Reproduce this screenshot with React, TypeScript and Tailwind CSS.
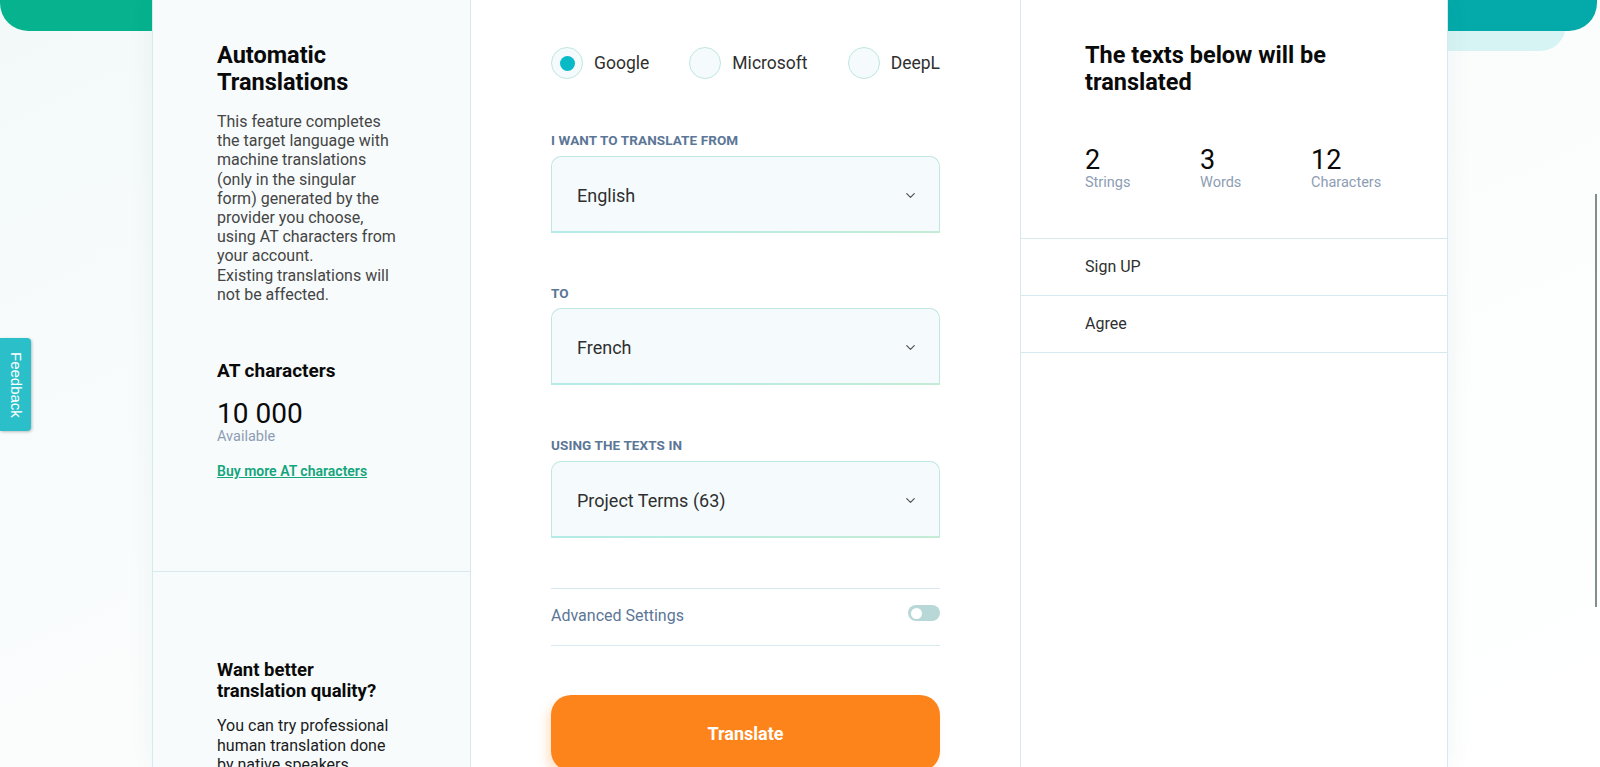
import React from "react";
import { ChevronDown } from "lucide-react";

function Radio({ label, checked }: { label: string; checked?: boolean }) {
  return (
    <div className="flex items-center gap-[11px]">
      <div className="w-[32px] h-[32px] rounded-full border border-[#bfe6df] bg-[#f5fbfd] flex items-center justify-center">
        {checked && <div className="w-[15px] h-[15px] rounded-full bg-[#08b9c6]" />}
      </div>
      <span className="text-[17.5px] text-[#2f2f2f]">{label}</span>
    </div>
  );
}

function Field({ value }: { value: string }) {
  return (
    <div className="relative h-[77px] rounded-t-[10px] border border-b-0 border-[#bfe6df] bg-[#f5fbfd] flex items-center justify-between pl-[25px] pr-[21px]">
      <span className="text-[18px] text-[#2f2f2f]">{value}</span>
      <ChevronDown size={15} strokeWidth={2} className="text-[#555]" />
      <div className="absolute left-[-1px] right-[-1px] bottom-0 h-[2px] bg-gradient-to-r from-[#b4ebe6] to-[#c4ecd6]" />
    </div>
  );
}

function Label({ children }: { children: React.ReactNode }) {
  return (
    <div className="text-[13.5px] leading-[16px] font-bold tracking-[0.1px] text-[#5b7696] uppercase">{children}</div>
  );
}

export default function App() {
  return (
    <div className="relative w-full h-[767px] overflow-hidden bg-gradient-to-br from-[#f3f9f9] via-[#fbfdfd] to-white font-[Roboto,sans-serif]">
      {/* decorative shapes */}
      <div className="absolute left-0 top-0 w-[220px] h-[31px] rounded-bl-[28px] bg-[#06b38e]" />
      <div className="absolute left-[1420px] top-0 w-[146px] h-[51px] rounded-br-[26px] bg-[#d7f4f4]" />
      <div className="absolute left-[1420px] top-0 w-[177px] h-[31px] rounded-br-[28px] bg-[#03aaa9]" />

      {/* feedback tab */}
      <div className="absolute left-0 top-[338px] w-[31px] h-[93px] rounded-r-[4px] bg-[#2bbfca] shadow-[1px_1px_3px_rgba(0,0,0,0.25)] flex items-center justify-center z-20">
        <span className="[writing-mode:vertical-rl] text-white text-[15px] font-['Liberation_Sans',sans-serif]">Feedback</span>
      </div>

      {/* scrollbar */}
      <div className="absolute left-[1595px] top-[194px] w-[2px] h-[413px] bg-[#7f8f8c]" />

      <div className="relative z-10 ml-[152px] flex h-[767px] w-[1296px] shadow-[0_0_24px_rgba(40,80,90,0.06)]">
        {/* left panel */}
        <div className="w-[319px] shrink-0 border-l border-r border-[#d7e8ee] bg-[#f7fbfc] flex flex-col">
          <div className="h-[572px] shrink-0 border-b border-[#d7e8ee] pl-[64px] pt-[42px]">
            <div className="text-[23.5px] leading-[26.5px] font-bold text-[#0a0a0a]">
              Automatic
              <br />
              Translations
            </div>
            <p className="mt-[17px] text-[16px] leading-[19.2px] text-[#454545]">
              This feature completes
              <br />
              the target language with
              <br />
              machine translations
              <br />
              (only in the singular
              <br />
              form) generated by the
              <br />
              provider you choose,
              <br />
              using AT characters from
              <br />
              your account.
              <br />
              Existing translations will
              <br />
              not be affected.
            </p>
            <div className="mt-[56px] text-[19px] leading-[22px] font-bold text-[#0a0a0a]">AT characters</div>
            <div className="mt-[18px] text-[28px] leading-[28px] text-[#0a0a0a]">10 000</div>
            <div className="text-[14.5px] leading-[17px] text-[#8d9db3]">Available</div>
            <a className="mt-[18px] block text-[14px] leading-[17px] font-semibold text-[#13a57b] underline">
              Buy more AT characters
            </a>
          </div>
          <div className="pl-[64px] pt-[88px]">
            <div className="text-[18.5px] leading-[20.5px] font-bold text-[#0a0a0a]">
              Want better
              <br />
              translation quality?
            </div>
            <p className="mt-[15px] text-[16px] leading-[19.5px] text-[#1c1c1c]">
              You can try professional
              <br />
              human translation done
              <br />
              by native speakers.
            </p>
          </div>
        </div>

        {/* middle panel */}
        <div className="w-[550px] shrink-0 border-r border-[#d7e8ee] bg-white pl-[80px] pr-[80px] pt-[47px]">
          <div className="flex justify-between">
            <Radio label="Google" checked />
            <Radio label="Microsoft" />
            <Radio label="DeepL" />
          </div>
          <div className="mt-[53px]">
            <Label>I want to translate from</Label>
          </div>
          <div className="mt-[8px]">
            <Field value="English" />
          </div>
          <div className="mt-[52px]">
            <Label>To</Label>
          </div>
          <div className="mt-[7px]">
            <Field value="French" />
          </div>
          <div className="mt-[52px]">
            <Label>Using the texts in</Label>
          </div>
          <div className="mt-[8px]">
            <Field value="Project Terms (63)" />
          </div>
          <div className="mt-[50px] h-[58px] border-t border-b border-[#d7e8ee] flex items-center justify-between">
            <span className="mb-[2px] text-[16px] text-[#5b7696]">Advanced Settings</span>
            <div className="mb-[8px] w-[32px] h-[16px] rounded-full bg-[#b8d8d8] flex items-center pl-[3px]">
              <div className="w-[11px] h-[11px] rounded-full bg-white" />
            </div>
          </div>
          <button className="mt-[49px] w-full h-[76px] rounded-[20px] bg-[#fd841b] text-white text-[18px] font-bold shadow-[-4px_6px_10px_rgba(253,132,29,0.22)]">
            Translate
          </button>
        </div>

        {/* right panel */}
        <div className="w-[427px] shrink-0 border-r border-[#d7e8ee] bg-white">
          <div className="pl-[64px] pt-[42px]">
            <div className="text-[23.5px] leading-[26.5px] font-bold text-[#0a0a0a]">
              The texts below will be
              <br />
              translated
            </div>
            <div className="mt-[51px] flex">
              <div className="w-[115px]">
                <div className="text-[27px] leading-[28px] text-[#0a0a0a]">2</div>
                <div className="text-[14.5px] leading-[17px] text-[#8d9db3]">Strings</div>
              </div>
              <div className="w-[111px]">
                <div className="text-[27px] leading-[28px] text-[#0a0a0a]">3</div>
                <div className="text-[14.5px] leading-[17px] text-[#8d9db3]">Words</div>
              </div>
              <div>
                <div className="text-[27px] leading-[28px] text-[#0a0a0a]">12</div>
                <div className="text-[14.5px] leading-[17px] text-[#8d9db3]">Characters</div>
              </div>
            </div>
          </div>
          <div className="mt-[47px] border-t border-[#d7e8ee]">
            <div className="h-[57px] border-b border-[#d7e8ee] pl-[64px] flex items-center text-[16px] text-[#2f2f2f]">Sign UP</div>
            <div className="h-[57px] border-b border-[#d7e8ee] pl-[64px] flex items-center text-[16px] text-[#2f2f2f]">Agree</div>
          </div>
        </div>
      </div>
    </div>
  );
}
